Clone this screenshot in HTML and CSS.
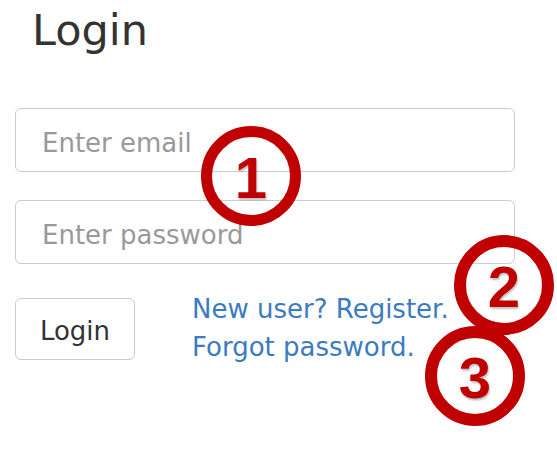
FILE: index.html
```html
<!DOCTYPE html>
<html lang="en">
<head>
<meta charset="utf-8">
<title>Login</title>
<link rel="stylesheet" href="styles.css">
</head>
<body>
<div class="page">
  <h1 class="title">Login</h1>
  <form class="form">
    <input class="field" type="email" placeholder="Enter email">
    <input class="field" type="password" placeholder="Enter password">
    <div class="actions">
      <button class="btn" type="button">Login</button>
      <div class="links">
        <a class="link" href="#">New user? Register.</a>
        <a class="link" href="#">Forgot password.</a>
      </div>
    </div>
  </form>
  <span class="mark mark-1">1</span>
  <span class="mark mark-2">2</span>
  <span class="mark mark-3">3</span>
</div>
</body>
</html>
```

FILE: styles.css
```css
html, body {
  margin: 0;
  padding: 0;
  background: #ffffff;
}

.page {
  position: relative;
  width: 557px;
  height: 451px;
  padding-left: 15px;
  box-sizing: border-box;
  font-family: "DejaVu Sans", Verdana, sans-serif;
  overflow: hidden;
}

.title {
  margin: 7px 0 55px 17px;
  font-size: 43px;
  line-height: 46px;
  font-weight: normal;
  color: #333333;
}

.form {
  display: flex;
  flex-direction: column;
  gap: 28px;
  margin: 0;
}

.field {
  box-sizing: border-box;
  width: 500px;
  height: 64px;
  padding: 6px 26px 0;
  border: 1px solid #cccccc;
  border-radius: 6px;
  background: #ffffff;
  font-family: "DejaVu Sans", Verdana, sans-serif;
  font-size: 26px;
  color: #555555;
  outline: none;
}

.field::placeholder {
  color: #999999;
}

.actions {
  display: flex;
  align-items: flex-start;
  margin-top: -2px;
}

.btn {
  box-sizing: border-box;
  width: 120px;
  height: 62px;
  margin-top: 8px;
  padding: 4px 0 0;
  border: 1px solid #cccccc;
  border-radius: 6px;
  background: #ffffff;
  font-family: "DejaVu Sans", Verdana, sans-serif;
  font-size: 26px;
  color: #333333;
}

.links {
  display: flex;
  flex-direction: column;
  margin-left: 57px;
  font-size: 26px;
  line-height: 38px;
}

.link {
  color: #3b7bbf;
  text-decoration: none;
}

.mark {
  position: absolute;
  box-sizing: border-box;
  width: 100px;
  height: 100px;
  padding-top: 3px;
  border: 11px solid #c00000;
  border-radius: 50%;
  display: flex;
  align-items: center;
  justify-content: center;
  font-family: "Liberation Sans", Arial, sans-serif;
  font-weight: bold;
  font-size: 58px;
  line-height: 1;
  color: #c00000;
  text-shadow: 1px 2px 2px rgba(0, 0, 0, 0.25);
}

.mark-1 {
  left: 201px;
  top: 126px;
}

.mark-2 {
  left: 454px;
  top: 235px;
  border-width: 12px;
}

.mark-3 {
  left: 425px;
  top: 326px;
  border-width: 12px;
}
```
